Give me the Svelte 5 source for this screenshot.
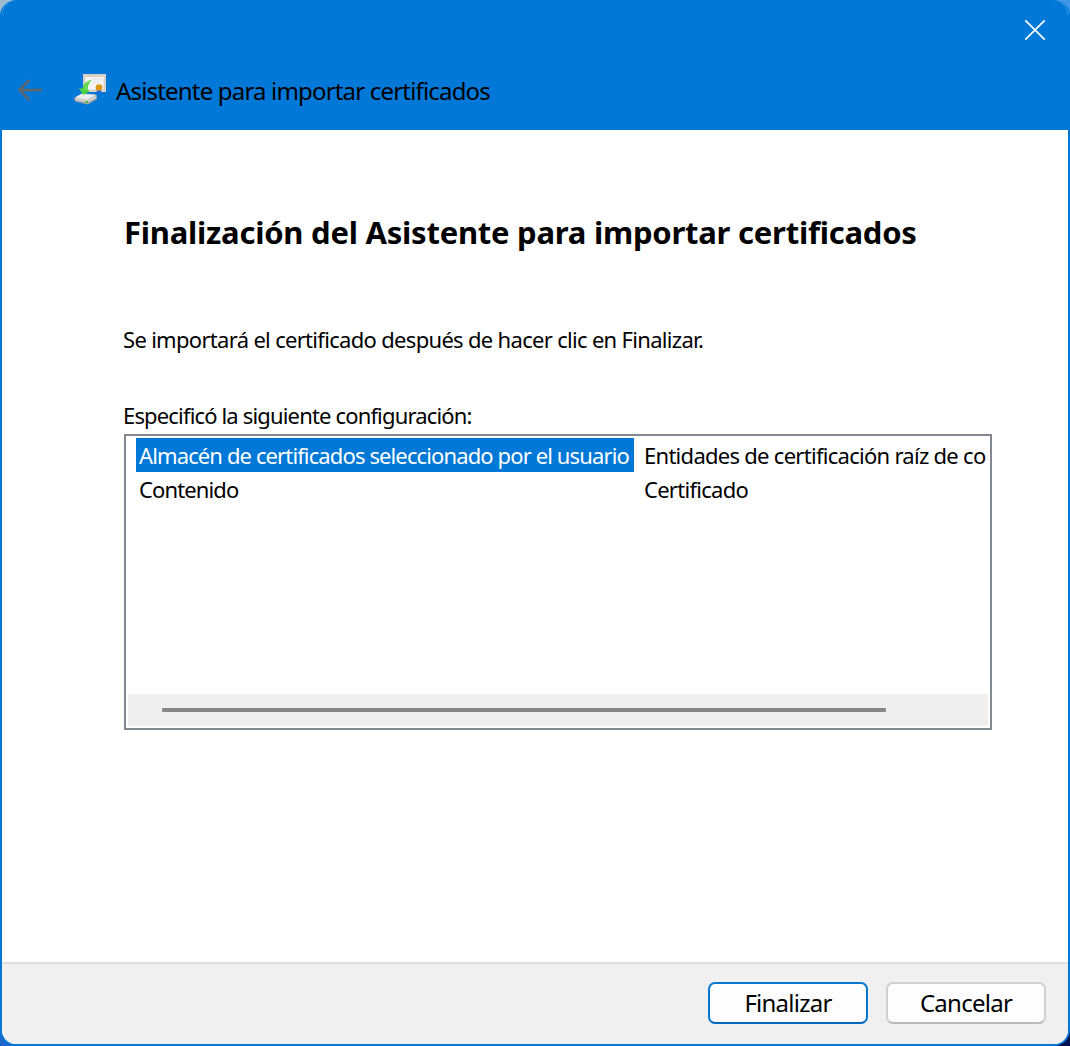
<script>
  let rows = [
    { name: 'Almacén de certificados seleccionado por el usuario', value: 'Entidades de certificación raíz de co' },
    { name: 'Contenido', value: 'Certificado' }
  ]
  let selected = 0
</script>

<div class="desktop">
  <div class="window">
    <header>
      <div class="caption">
        <button class="close" aria-label="Cerrar">
          <svg width="22" height="22" viewBox="0 0 22 22">
            <path d="M1.3 1.3 L20.7 20.7 M20.7 1.3 L1.3 20.7" stroke="#fff" stroke-width="1.7" />
          </svg>
        </button>
      </div>
      <div class="titlebar">
        <svg class="back" width="26" height="24" viewBox="0 0 26 24">
          <path d="M25 12 H2 M12.5 2 L2.5 12 L12.5 22" fill="none" stroke="#656565" stroke-width="2.4" />
        </svg>
        <svg class="logo" width="34" height="32" viewBox="0 0 34 32">
          <!-- certificate -->
          <path d="M9 1 H32 V19 H9 Z" fill="#d8d0c4" />
          <path d="M11.5 4 H29.5 V16.5 H11.5 Z" fill="#f4f4f5" />
          <path d="M18 6 H27 M19 9 H25" stroke="#dcdce3" stroke-width="1" />
          <path d="M23 17 L22 21 L25 19.5 L28 21 L27 17 Z" fill="#2468dc" />
          <circle cx="25" cy="14.5" r="3.3" fill="#d69818" />
          <!-- drive -->
          <path d="M0 25 L8 20.5 L22.5 21.5 L23 26 L14 31.5 L1 28.5 Z" fill="#a5a8aa" />
          <path d="M1 24.5 L8 20.5 L22 22 L13 27 Z" fill="#eeeeef" />
          <path d="M2 26 L13 28.5 L22 24" fill="none" stroke="#dcdddf" stroke-width="1.5" />
          <path d="M11 28.8 L14 29.3" stroke="#5eb547" stroke-width="2" />
          <!-- import arrow -->
          <path d="M18 7 C13 7.5 9.5 11 8.5 15.5 L5 15.5 L9.5 22 L16 18 L13.5 16.5 C13.5 13 15 9.5 18 7 Z" fill="#4ed33c" />
          <path d="M16.5 8 C13 10 11.5 13 11 17" fill="none" stroke="#8bea75" stroke-width="1" />
        </svg>
        <span class="title">Asistente para importar certificados</span>
      </div>
    </header>

    <main>
      <h1>Finalización del Asistente para importar certificados</h1>
      <p class="intro">Se importará el certificado después de hacer clic en Finalizar.</p>
      <p class="label">Especificó la siguiente configuración:</p>
      <div class="list">
        <div class="rows">
          {#each rows as row, i}
            <div class="row">
              <div class="name" class:selected={i === selected}>{row.name}</div>
              <div class="value">{row.value}</div>
            </div>
          {/each}
        </div>
        <div class="scrollbar"><div class="thumb"></div></div>
      </div>
    </main>

    <footer>
      <button class="btn primary">Finalizar</button>
      <button class="btn">Cancelar</button>
    </footer>
  </div>
</div>

<style>
  .desktop {
    height: 1046px;
    /* wallpaper showing past the rounded corners */
    background:
      linear-gradient(90deg, #9dbbd0 50%, #3f97e8 50%) top / 100% 50% no-repeat,
      linear-gradient(90deg, #1a68cc 50%, #00104f 50%) bottom / 100% 50% no-repeat;
    overflow: hidden;
  }
  .window {
    box-sizing: border-box;
    width: 1070px;
    height: 1046px;
    display: flex;
    flex-direction: column;
    border: 2px solid #0078d7;
    border-top: 0;
    border-radius: 16px;
    background: #fff;
    overflow: hidden;
    color: #000;
    font-family: "Noto Sans", "Open Sans", sans-serif;
  }
  header {
    height: 130px;
    flex: none;
    background: #0078d7;
  }
  .caption {
    display: flex;
    justify-content: flex-end;
    height: 60px;
  }
  .close {
    width: 66px;
    padding: 0;
    border: 0;
    background: none;
  }
  .close svg {
    display: block;
    margin: 0 auto;
  }
  .titlebar {
    display: flex;
    align-items: center;
    height: 62px;
  }
  .back {
    margin: -2px 0 0 15px;
  }
  .logo {
    margin: -4px 0 0 31px;
  }
  .title {
    margin-left: 8px;
    font-size: 24px;
    line-height: 34px;
    letter-spacing: -0.82px;
  }
  main {
    flex: 1;
    padding: 79px 76px 0 121px;
  }
  h1 {
    margin: 0;
    padding-left: 1px;
    font-size: 31px;
    line-height: 46px;
    letter-spacing: -0.24px;
    white-space: nowrap;
  }
  p {
    margin: 0;
    font-size: 22px;
    line-height: 30px;
    letter-spacing: -0.84px;
  }
  .intro {
    margin-top: 69px;
    letter-spacing: -0.69px;
  }
  .label {
    margin-top: 46px;
  }
  .list {
    box-sizing: border-box;
    display: flex;
    flex-direction: column;
    width: 868px;
    height: 296px;
    margin: 4px 0 0 1px;
    padding: 2px;
    border: 2px solid #828790;
  }
  .rows {
    flex: 1;
    overflow: hidden;
  }
  .row {
    display: flex;
    height: 34px;
    font-size: 22px;
    line-height: 34px;
    letter-spacing: -0.88px;
    white-space: nowrap;
  }
  .name {
    width: 495px;
    margin-left: 8px;
    padding-left: 3px;
  }
  .selected {
    background: #0078d7;
    color: #fff;
  }
  .value {
    flex: 1;
    min-width: 0;
    margin-left: 10px;
    letter-spacing: -0.72px;
  }
  .scrollbar {
    height: 32px;
    display: flex;
    align-items: center;
    background: #efefef;
  }
  .thumb {
    width: 724px;
    height: 4px;
    margin-left: 34px;
    border-radius: 1px;
    background: #868686;
  }
  footer {
    box-sizing: border-box;
    height: 82px;
    flex: none;
    display: flex;
    justify-content: flex-end;
    gap: 18px;
    padding: 18px 22px 0 0;
    border-top: 2px solid #dfdfdf;
    background: #f0f0f0;
  }
  .btn {
    box-sizing: border-box;
    width: 160px;
    height: 42px;
    padding: 0;
    border: 2px solid #d0d0d0;
    border-bottom-color: #bababa;
    border-radius: 7px;
    background: #fdfdfd;
    color: #000;
    font: 24px/36px "Noto Sans", "Open Sans", sans-serif;
    letter-spacing: -0.75px;
  }
  .primary {
    border-color: #0078d4;
    border-bottom-color: #0067c0;
  }
</style>
